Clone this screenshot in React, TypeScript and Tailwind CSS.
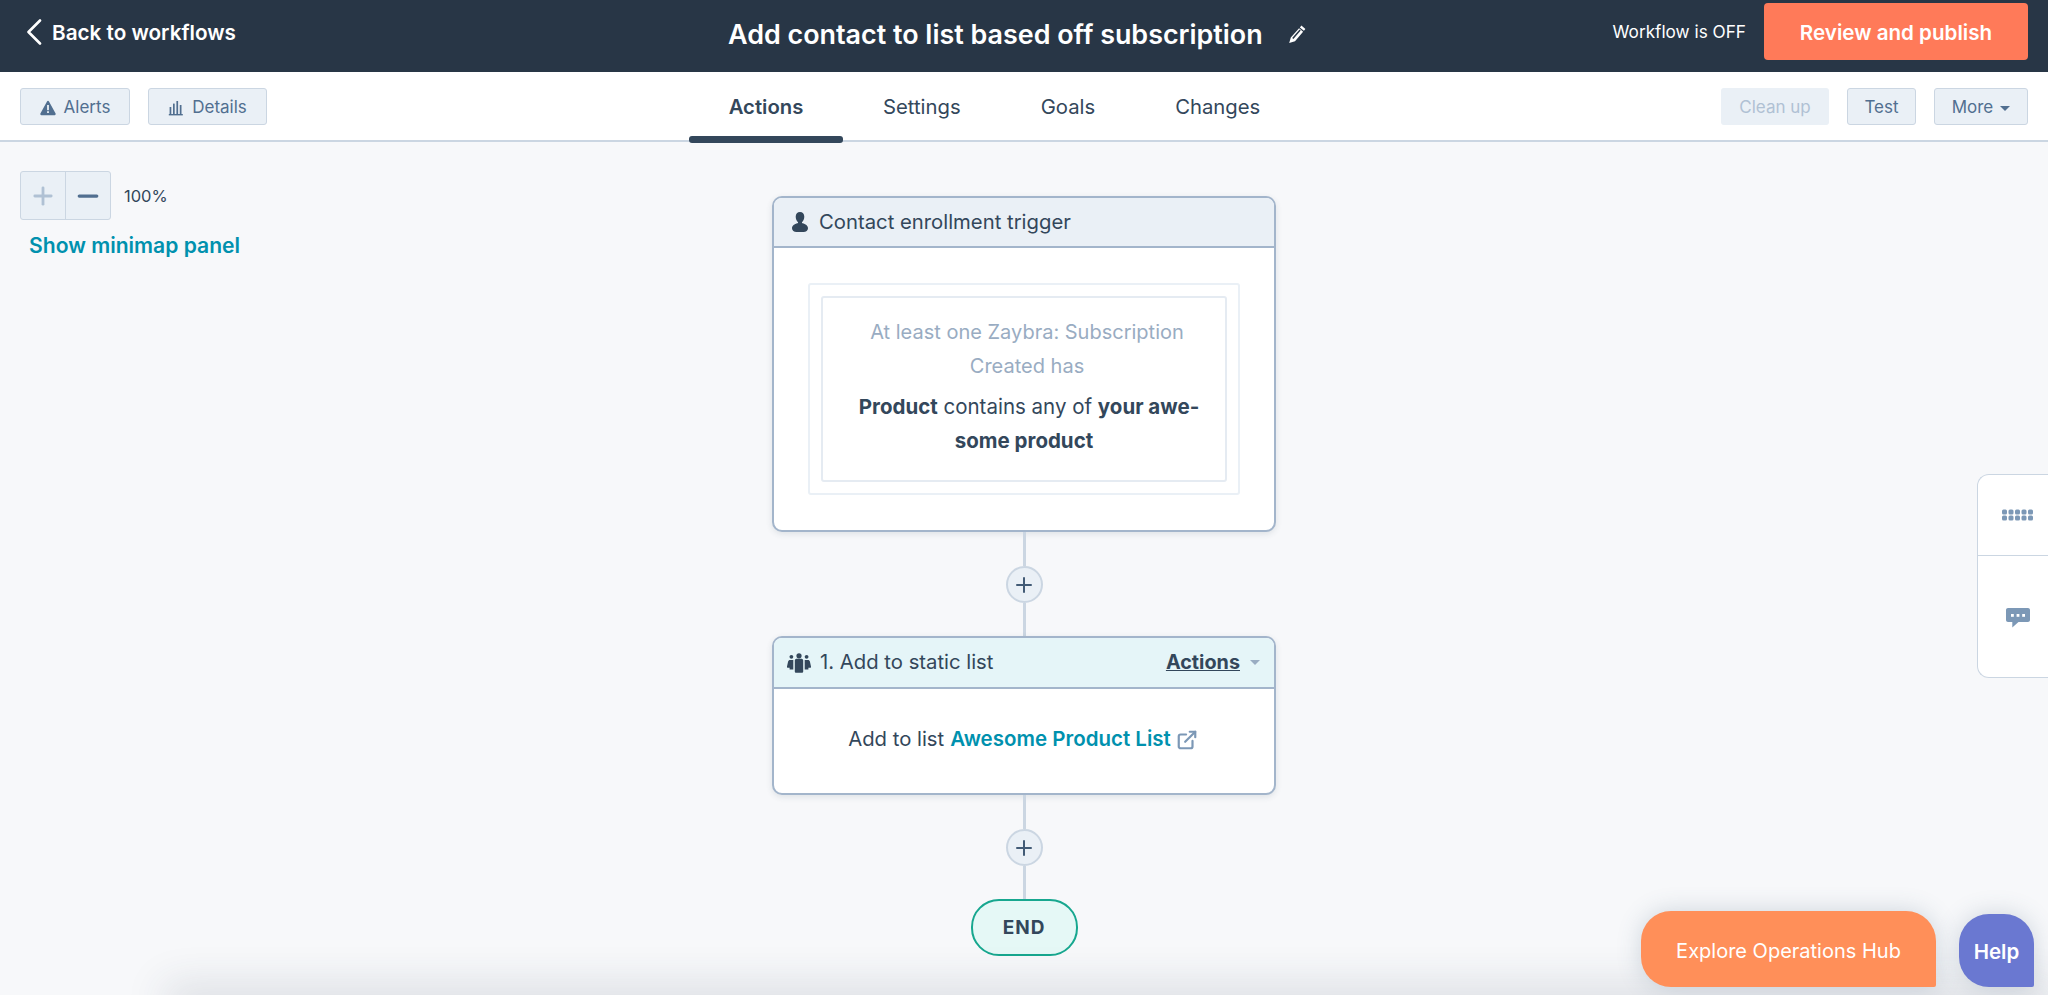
import { Plus, Minus, ExternalLink } from 'lucide-react';

function BackChevron() {
  return (
    <svg width="16" height="26" viewBox="0 0 16 26" className="fill-none stroke-white">
      <path d="M14 1.500L2.500 13 14 24.500" strokeWidth="2.600" strokeLinecap="round" strokeLinejoin="round" />
    </svg>
  );
}

function AlertIcon() {
  return (
    <svg width="16" height="16" viewBox="0 0 16 16" className="fill-[#516f90]">
      <path d="M8 .8c.4 0 .8.2 1 .6l6.6 12.2c.4.7-.1 1.600-1 1.600H1.400c-.9 0-1.400-.9-1-1.600L7 1.400c.2-.4.6-.6 1-.6z" />
      <rect x="7.100" y="5" width="1.800" height="5.200" fill="#eaf0f6" />
      <rect x="7.100" y="11.200" width="1.800" height="1.800" fill="#eaf0f6" />
    </svg>
  );
}

function BarsIcon() {
  return (
    <svg width="16" height="16" viewBox="0 0 16 16" className="fill-[#516f90]">
      <rect x="1.600" y="7" width="1.700" height="7" />
      <rect x="5" y="3.600" width="1.700" height="10.400" />
      <rect x="8.400" y="1" width="1.700" height="13" />
      <rect x="11.800" y="5" width="1.700" height="9" />
      <rect x="0.800" y="14" width="14" height="1.400" />
    </svg>
  );
}

function PencilIcon() {
  return (
    <svg width="20" height="20" viewBox="0 0 20 20" className="fill-white">
      <path d="M14.400 1.600l4 3.400-1.500 1.800-4-3.400 1.500-1.800z" />
      <path d="M12.100 4.300l4 3.400L8 17.300 2.200 19l1.600-5.400 8.300-9.300zM5.200 13.900l1.200 1 7.300-8.300-1.100-1-7.400 8.300z" />
    </svg>
  );
}

function PersonIcon() {
  return (
    <svg width="18" height="20" viewBox="0 0 18 20" className="fill-[#33475b]">
      <path d="M9 0c2.600 0 4.300 2 4.300 4.800 0 2.200-.9 4.200-2.100 5.200-.5.5-.3 1 .3 1.200 3 .8 5.500 2.100 5.500 5.100 0 2.400-2 3.700-4.500 3.700H5.500C3 20 1 18.700 1 16.300c0-3 2.500-4.300 5.500-5.100.6-.2.8-.7.3-1.200C5.600 9 4.700 7 4.700 4.800 4.700 2 6.400 0 9 0z" />
    </svg>
  );
}

function GroupIcon() {
  return (
    <svg width="24" height="20" viewBox="0 0 24 20" className="fill-[#33475b]">
      <circle cx="12" cy="2.800" r="2.600" />
      <path d="M7.800 7.500c0-1.200 1-1.800 2-1.800h4.400c1 0 2 .6 2 1.800V18.500c0 .8-.6 1.300-1.400 1.300H9.200c-.8 0-1.400-.5-1.400-1.300z" />
      <circle cx="4.400" cy="3.800" r="1.900" />
      <path d="M6.300 7H3c-1 0-1.600.6-1.900 1.500L0 13.500c-.2.800.3 1.300 1 1.300h1.600v1.700h3.700z" />
      <circle cx="19.600" cy="3.800" r="1.900" />
      <path d="M17.700 7H21c1 0 1.600.6 1.900 1.500l1.100 5c.2.800-.3 1.300-1 1.300h-1.600v1.700h-3.700z" />
    </svg>
  );
}

function DotsIcon() {
  return (
    <svg width="32" height="12" viewBox="0 0 32 12" className="fill-[#7c98b6]">
      {[2.500, 9, 15.500, 22, 28.500].map((cx) => (
        <g key={cx}>
          <rect x={cx - 2.500} y="0.500" width="5" height="5" rx="1.500" />
          <rect x={cx - 2.500} y="6.500" width="5" height="5" rx="1.500" />
        </g>
      ))}
    </svg>
  );
}

function ChatIcon() {
  return (
    <svg width="24" height="20" viewBox="0 0 24 20">
      <path
        className="fill-[#7c98b6]"
        d="M2 0h20c1.100 0 2 .9 2 2v10c0 1.100-.9 2-2 2H12.500L6.300 19.500V14H2c-1.100 0-2-.9-2-2V2C0 .9.900 0 2 0z"
      />
      <rect x="5" y="6" width="2.800" height="2.800" fill="#fff" />
      <rect x="10.600" y="6" width="2.800" height="2.800" fill="#fff" />
      <rect x="16.200" y="6" width="2.800" height="2.800" fill="#fff" />
    </svg>
  );
}

function Caret({ className }: { className: string }) {
  return <span className={`h-0 w-0 border-x-[5px] border-t-[5px] border-x-transparent ${className}`} />;
}

function ToolButton({ children, className = '' }: { children: React.ReactNode; className?: string }) {
  return (
    <button className={`flex h-[37px] items-center justify-center rounded-[3px] border border-[#cbd6e2] bg-[#eaf0f6] pt-[4px] text-[17px] text-[#516f90] ${className}`}>
      {children}
    </button>
  );
}

function AddStep() {
  return (
    <div className="flex flex-col items-center">
      <div className="h-[34px] w-[3px] bg-[#cbd6e2]" />
      <button className="flex h-[37px] w-[37px] shrink-0 items-center justify-center rounded-full border-2 border-[#cbd6e2] bg-[#eaf0f6]">
        <Plus size={24} strokeWidth={2} className="text-[#425b76]" />
      </button>
      <div className="h-[33px] w-[3px] bg-[#cbd6e2]" />
    </div>
  );
}

export default function App() {
  return (
    <div className="relative flex h-[995px] w-[2048px] flex-col overflow-hidden bg-[#f7f8fa] font-['Inter',sans-serif] text-[#33475b]">
      {/* Top bar */}
      <header className="flex h-[72px] shrink-0 items-center bg-[#283646] text-white">
        <button className="mb-[7px] flex w-[728px] items-center gap-[10px] pl-[26px] text-[20.700px] font-semibold">
          <BackChevron />
          Back to workflows
        </button>
        <h1 className="mb-[4px] text-[26.900px] font-semibold">Add contact to list based off subscription</h1>
        <span className="mb-[5px] ml-[24px]"><PencilIcon /></span>
        <span className="mb-[8px] ml-auto text-[17.200px]">Workflow is OFF</span>
        <button className="mb-[9px] ml-[18px] mr-[20px] h-[57px] w-[264px] rounded-[4px] bg-[#ff7a59] pt-[3px] text-[20.600px] font-semibold">
          Review and publish
        </button>
      </header>

      {/* Toolbar and tabs */}
      <div className="flex h-[70px] shrink-0 items-center border-b-2 border-[#cbd6e2] bg-white">
        <div className="flex w-[689px] gap-[18px] pl-[20px]">
          <ToolButton className="w-[110px] gap-[8px]"><AlertIcon />Alerts</ToolButton>
          <ToolButton className="w-[119px] gap-[8px]"><BarsIcon />Details</ToolButton>
        </div>
        <nav className="flex h-full pt-[2px] text-[20.300px]">
          <a className="relative flex w-[154px] items-center justify-center font-semibold">
            Actions
            <span className="absolute -bottom-[3px] left-0 h-[7px] w-full rounded-[3px] bg-[#33475b]" />
          </a>
          <a className="ml-[40px] flex items-center">Settings</a>
          <a className="ml-[80px] flex items-center">Goals</a>
          <a className="ml-[80px] flex items-center">Changes</a>
        </nav>
        <div className="ml-auto flex gap-[18px] pr-[20px]">
          <button className="h-[37px] w-[108px] rounded-[3px] bg-[#eaf0f6] pt-[4px] text-[17px] text-[#b0c1d4]">Clean up</button>
          <ToolButton className="w-[69px]">Test</ToolButton>
          <ToolButton className="w-[94px] gap-[7px]">More<Caret className="border-t-[#516f90]" /></ToolButton>
        </div>
      </div>

      {/* Canvas */}
      <main className="relative flex flex-1 flex-col items-center pt-[54px]">
        <div className="absolute left-[20px] top-[29px] flex flex-col items-start">
          <div className="flex items-center">
            <div className="flex h-[49px] w-[91px] rounded-[3px] border border-[#cbd6e2] bg-[#eaf0f6]">
              <span className="flex w-[45px] items-center justify-center border-r border-[#cbd6e2]">
                <Plus size={28} strokeWidth={2.400} className="text-[#b0c1d4]" />
              </span>
              <span className="flex flex-1 items-center justify-center">
                <Minus size={30} strokeWidth={2.600} className="text-[#516f90]" />
              </span>
            </div>
            <span className="ml-[13px] pt-[2px] text-[16.500px]">100%</span>
          </div>
          <a className="ml-[9px] mt-[14px] text-[21.100px] font-semibold leading-[24px] text-[#0091ae]">Show minimap panel</a>
        </div>

        {/* Enrollment trigger */}
        <section className="w-[504px] overflow-hidden rounded-[10px] border-2 border-[#a3b5cb] bg-white shadow-[0_2px_6px_rgba(45,62,80,0.12)]">
          <div className="flex h-[50px] items-center border-b-2 border-[#a3b5cb] bg-[#eaf0f6] pl-[17px] text-[20.300px]">
            <PersonIcon />
            <span className="ml-[10px]">Contact enrollment trigger</span>
          </div>
          <div className="px-[34px] py-[35px]">
            <div className="rounded-[3px] border-2 border-[#eaf0f6] p-[11px]">
              <div className="rounded-[3px] border-2 border-[#e5ebf2] px-[10px] pb-[22px] pt-[17px] text-center text-[20px] leading-[34px]">
                <p className="pl-[6px] text-[#99acc2]">At least one Zaybra: Subscription<br />Created has</p>
                <p className="mt-[7px] text-[20.500px]"><span className="pl-[10px]"><b className="font-bold">Product</b> contains any of <b className="font-bold">your awe-</b></span><br /><b className="font-bold">some product</b></p>
              </div>
            </div>
          </div>
        </section>

        <AddStep />

        {/* Static list action */}
        <section className="w-[504px] overflow-hidden rounded-[10px] border-2 border-[#a3b5cb] bg-white shadow-[0_2px_6px_rgba(45,62,80,0.12)]">
          <div className="flex h-[51px] items-center border-b-2 border-[#a3b5cb] bg-[#e5f5f8] pl-[13px] pr-[14px] text-[20.300px]">
            <GroupIcon />
            <span className="ml-[9px]">1. Add to static list</span>
            <a className="ml-auto text-[19.800px] font-bold underline">Actions</a>
            <Caret className="ml-[10px] border-t-[#99acc2]" />
          </div>
          <div className="flex h-[104px] items-center justify-center pb-[3px] pr-[2px] text-[20.300px]">
            Add to list
            <a className="ml-[6px] text-[20.500px] font-semibold text-[#0091ae]">Awesome Product List</a>
            <ExternalLink size={22} strokeWidth={2.400} className="ml-[5px] text-[#7c98b6]" />
          </div>
        </section>

        <AddStep />

        <div className="flex h-[57px] w-[107px] items-center justify-center rounded-[28px] border-2 border-[#17a78f] bg-[#e5f8f6] pt-[2px] text-[19px] font-bold tracking-[1px]">
          END
        </div>

        {/* Side rail */}
        <aside className="absolute right-0 top-[332px] flex h-[204px] w-[71px] flex-col rounded-l-[12px] border border-r-0 border-[#cbd6e2] bg-white">
          <div className="flex h-[81px] items-center justify-center border-b border-[#cbd6e2] pl-[10px]"><DotsIcon /></div>
          <div className="flex flex-1 items-center justify-center pl-[10px] pt-[3px]"><ChatIcon /></div>
        </aside>

        {/* Bottom shadow and floating buttons */}
        <div className="pointer-events-none absolute -bottom-[12px] left-[175px] right-0 h-[12px] shadow-[0_0_40px_10px_rgba(45,62,80,0.15)]" />
        <div className="absolute bottom-[8px] right-[14px] flex items-end gap-[23px] text-white">
          <button className="flex h-[76px] w-[295px] items-center justify-center rounded-[30px] rounded-br-[2px] bg-[#ff8f59] pt-[3px] text-[20px] shadow-[0_0_24px_rgba(66,91,118,0.22)]">
            Explore Operations Hub
          </button>
          <button className="flex h-[73px] w-[75px] items-center justify-center rounded-[30px] rounded-br-[2px] bg-[#6a78d1] pt-[3px] text-[20.500px] font-semibold shadow-[0_0_24px_rgba(66,91,118,0.22)]">
            Help
          </button>
        </div>
      </main>
    </div>
  );
}
